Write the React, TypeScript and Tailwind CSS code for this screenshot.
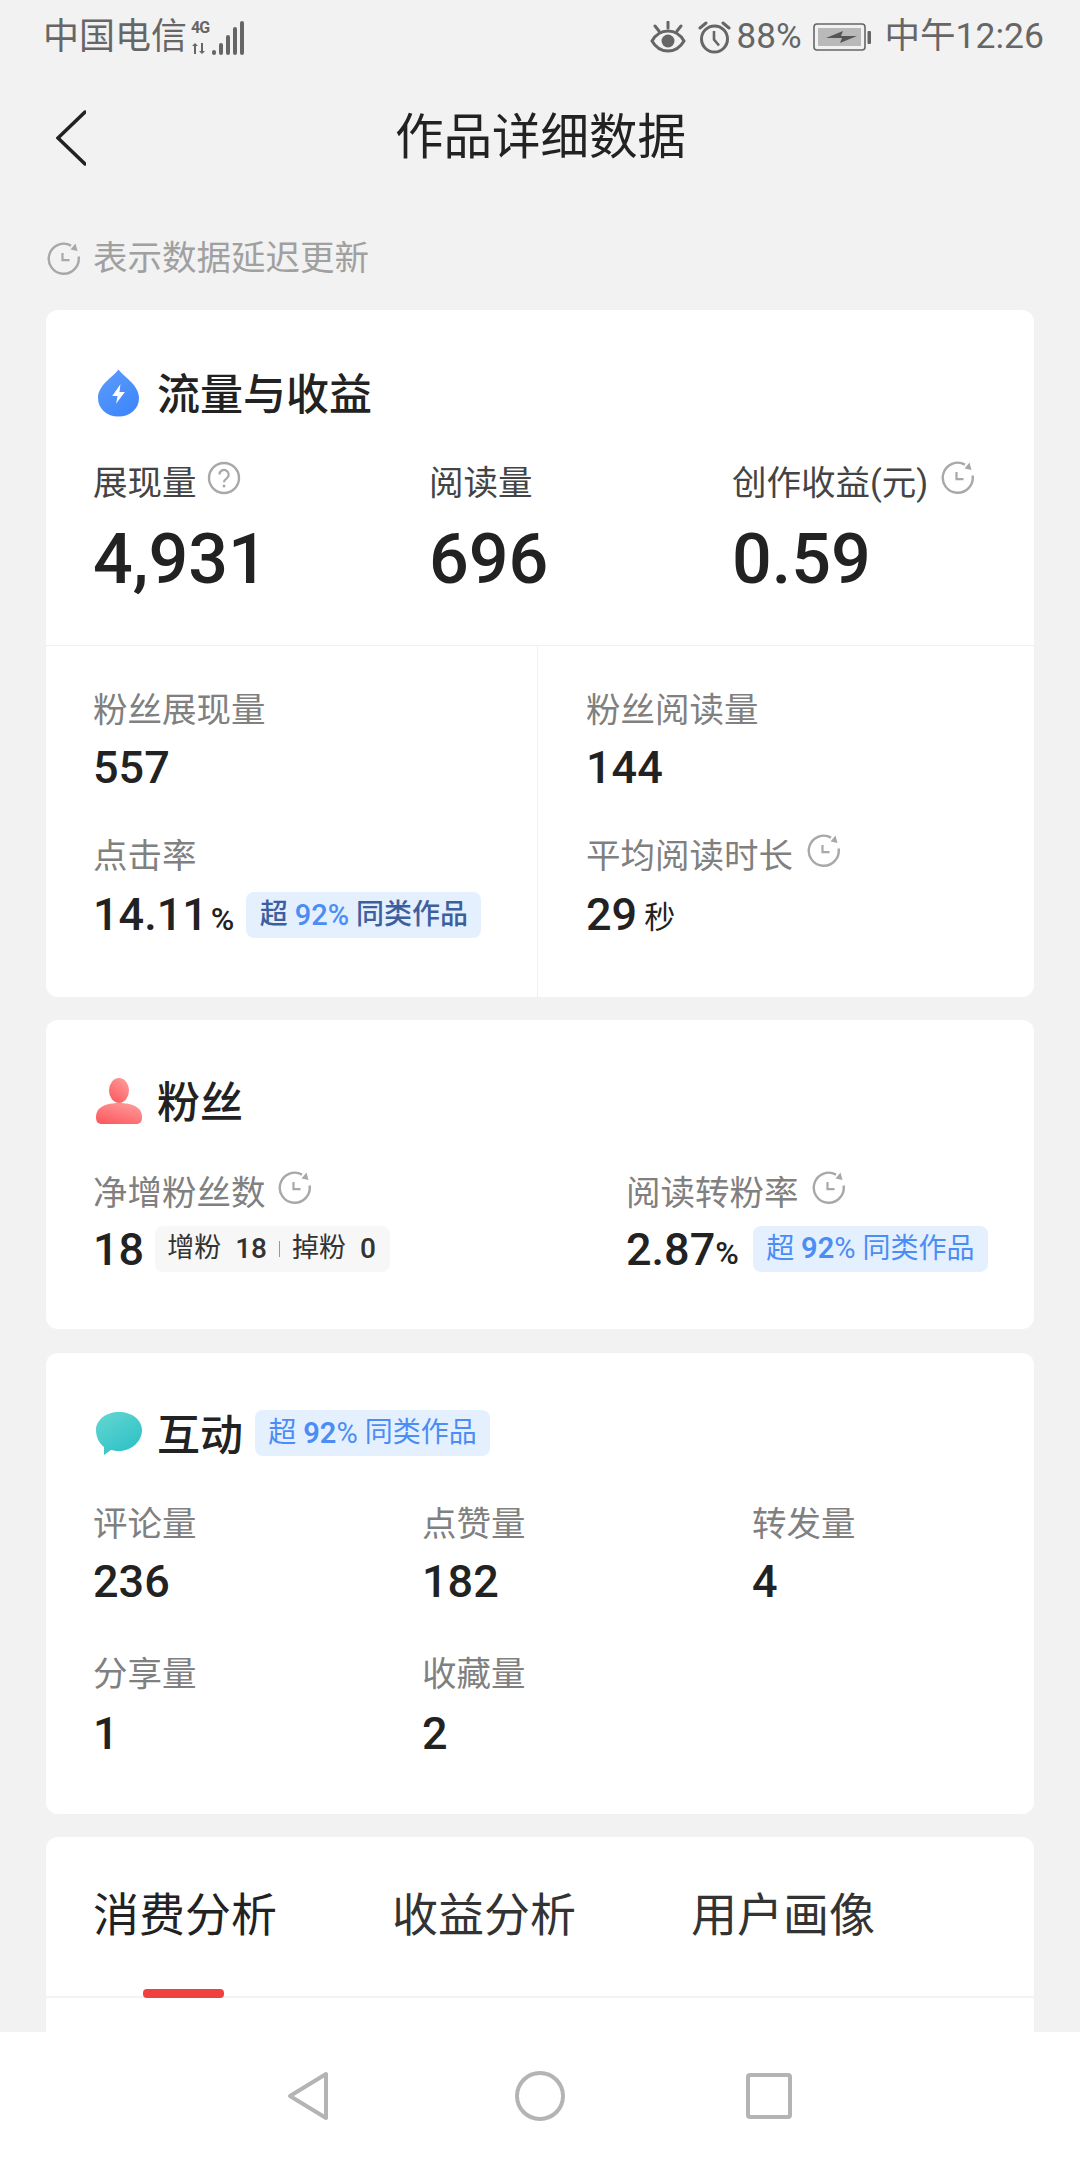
const Clock = ({ className = "" }: { className?: string }) => (
  <svg viewBox="0 0 34 34" className={`w-[34px] h-[34px] shrink-0 ${className}`} fill="none" stroke="#a8a8a8" strokeWidth="2.4">
    <path d="M31.6 14.5A15 15 0 1 1 24 3.6" />
    <path d="M28.5 1.5 L30.5 9 L23.5 7.5" fill="#a8a8a8" stroke="none" />
    <path d="M15.5 11v7.2h7" strokeWidth="2.2" />
  </svg>
);

const Help = () => (
  <svg viewBox="0 0 34 34" className="w-[34px] h-[34px] shrink-0" fill="none" stroke="#a8a8a8" strokeWidth="2.4">
    <circle cx="17" cy="17" r="15" />
    <path d="M12.5 13.5a4.6 4.6 0 1 1 7.2 3.8c-1.7 1.2-2.7 2-2.7 4" strokeWidth="2.2" />
    <circle cx="17" cy="25" r="1.5" fill="#a8a8a8" stroke="none" />
  </svg>
);

const Drop = () => (
  <svg viewBox="0 0 42 48" className="w-[41px] h-[48px] shrink-0">
    <defs>
      <linearGradient id="dropFill" x1="0" y1="0" x2="0.6" y2="1">
        <stop offset="0" stopColor="#5e9dfa" />
        <stop offset="1" stopColor="#3f87fb" />
      </linearGradient>
    </defs>
    <path d="M21 0C27 8 42 16 42 29C42 40 33 48 21 48C9 48 0 40 0 29C0 16 15 8 21 0Z" fill="url(#dropFill)" />
    <path d="M23 15L14.5 27H20L18.5 35L27.5 23H22Z" fill="#fff" />
  </svg>
);

const Person = () => (
  <svg viewBox="0 0 46 46" className="w-[46px] h-[46px] shrink-0">
    <defs>
      <linearGradient id="personFill" x1="0.8" y1="0" x2="0.2" y2="1">
        <stop offset="0" stopColor="#ff9a9a" />
        <stop offset="1" stopColor="#fc5a5f" />
      </linearGradient>
    </defs>
    <ellipse cx="23" cy="12.5" rx="10" ry="12.5" fill="url(#personFill)" />
    <path d="M23 25C36 25 46 29 46 39C46 44 44 46 40 46H6C2 46 0 44 0 39C0 29 10 25 23 25Z" fill="url(#personFill)" />
  </svg>
);

const Bubble = () => (
  <svg viewBox="0 0 46 43" className="w-[46px] h-[43px] shrink-0 -mt-[6px]">
    <defs>
      <linearGradient id="bubbleFill" x1="0.1" y1="0" x2="0.8" y2="1">
        <stop offset="0" stopColor="#63d6d2" />
        <stop offset="1" stopColor="#2cc0c5" />
      </linearGradient>
    </defs>
    <path d="M23 0C36 0 46 8 46 18C46 29 36 39 23 39C20 39 17 38.500 15 38L8 43L8 35C3 31 0 25 0 18C0 8 10 0 23 0Z" fill="url(#bubbleFill)" />
  </svg>
);

const Signal = () => (
  <div className="flex items-end gap-[3px] ml-[4px] h-[36px]">
    <div className="flex flex-col justify-between h-[34px] w-[18px] mb-[1px]">
      <span className="text-[16px] leading-[16px] font-bold text-[#666] tracking-[-1px]">4G</span>
      <svg viewBox="0 0 18 11" className="w-[18px] h-[11px]" fill="#666">
        <path d="M3 11V3H1L4 0L7 3H5V11Z" />
        <path d="M10 0H12V8H14L11 11L8 8H10Z" />
      </svg>
    </div>
    <div className="w-[4px] h-[5px] bg-[#666] rounded-full" />
    <div className="w-[4px] h-[12px] bg-[#666] rounded-full" />
    <div className="w-[4px] h-[20px] bg-[#666] rounded-full" />
    <div className="w-[4px] h-[28px] bg-[#666] rounded-full" />
    <div className="w-[4px] h-[34px] bg-[#666] rounded-full" />
  </div>
);

const Eye = () => (
  <svg viewBox="0 0 36 32" className="w-[36px] h-[32px]" fill="none" stroke="#666" strokeWidth="3">
    <path d="M2 20C6 13 12 10 18 10C24 10 30 13 34 20C30 27 24 30 18 30C12 30 6 27 2 20Z" />
    <circle cx="18" cy="20" r="6.500" fill="#666" stroke="none" />
    <path d="M18 1v6M5 5l4 5M31 5l-4 5" strokeLinecap="round" />
  </svg>
);

const Alarm = () => (
  <svg viewBox="0 0 33 33" className="w-[33px] h-[33px]" fill="none" stroke="#666" strokeWidth="3">
    <circle cx="16.500" cy="18" r="13" />
    <path d="M16 10v8.500l5 6" strokeWidth="2.600" />
    <path d="M2 7l6-5M31 7l-6-5" strokeLinecap="round" />
  </svg>
);

const Battery = () => (
  <svg viewBox="0 0 58 30" className="w-[58px] h-[30px]" fill="none">
    <rect x="1" y="2" width="51" height="26" rx="3" stroke="#666" strokeWidth="1.600" />
    <rect x="5" y="6" width="43" height="18" fill="#b9b9b9" />
    <path d="M13 16L30 9L28 14L44 14L27 21L29 16Z" fill="#555" />
    <rect x="54.500" y="9" width="3.500" height="13" rx="1" fill="#666" />
  </svg>
);

const Pct = ({ dark = false }: { dark?: boolean }) => (
  <span className={`inline-flex items-center h-[46px] w-[235px] justify-center rounded-[8px] bg-[#e5f0ff] text-[28px] leading-none whitespace-pre ${dark ? "text-[#3d5f9e] font-medium" : "text-[#4b8df5]"}`}>
    超 <span className={`text-[29px] text-[#4b8df5] ${dark ? "font-medium" : "font-semibold"}`}>92</span><span className="text-[29px] text-[#4b8df5]">%</span> 同类作品
  </span>
);

const Label = ({ children, dark = false }: { children: string; dark?: boolean }) => (
  <div className={`text-[34.5px] leading-[44px] whitespace-nowrap ${dark ? "text-[#444]" : "text-[#808080]"}`}>{children}</div>
);

const Value = ({ children }: { children: string }) => (
  <span className="text-[45px] leading-[56px] font-medium text-[#222]">{children}</span>
);

const Heading = ({ children }: { children: string }) => (
  <div className="text-[43px] leading-[60px] font-medium text-[#222] whitespace-nowrap">{children}</div>
);

const Metric = ({ label, value, rowGap = "mt-[8px]" }: { label: string; value: string; rowGap?: string }) => (
  <div>
    <Label>{label}</Label>
    <div className={rowGap}><Value>{value}</Value></div>
  </div>
);

export default function App() {
  return (
    <div className="w-[1080px] h-[2160px] flex flex-col overflow-hidden bg-[#f2f2f2] font-['Roboto','Noto_Sans_CJK_SC',sans-serif]">
      <div className="flex-1 min-h-0 overflow-hidden">
        {/* status bar */}
        <div className="h-[74px] pl-[43px] pr-[36px] flex items-center justify-between text-[#666] text-[35.5px]">
          <div className="flex items-center">
            <span className="text-[36px]">中国电信</span>
            <Signal />
          </div>
          <div className="flex items-center">
            <Eye />
            <span className="ml-[12px]"><Alarm /></span>
            <span className="ml-[6px] text-[35px]">88%</span>
            <span className="ml-[11px]"><Battery /></span>
            <span className="ml-[14px]">中午12:26</span>
          </div>
        </div>

        {/* title bar */}
        <div className="h-[128px] pl-[56px] flex items-center">
          <svg viewBox="0 0 30 56" className="w-[30px] h-[56px] shrink-0" fill="none" stroke="#222" strokeWidth="3.500" strokeLinecap="round">
            <path d="M29 2L2 28L29 54" />
          </svg>
          <div className="ml-[309px] text-[48.5px] leading-none text-[#222]">作品详细数据</div>
        </div>

        <div className="h-[108px] pt-[6px] pl-[47px] flex items-center text-[34.5px] text-[#a0a0a0]">
          <Clock />
          <span className="ml-[12px]">表示数据延迟更新</span>
        </div>

        <div className="px-[46px]">
          {/* traffic and revenue */}
          <div className="bg-white rounded-[12px]">
            <div className="pt-[53px] pb-[44px] px-[47px] border-b border-[#f0f0f0]">
              <div className="h-[60px] flex items-center gap-[18px] ml-[5px]">
                <Drop />
                <div className="mt-[4px]"><Heading>流量与收益</Heading></div>
              </div>
              <div className="mt-[38px] grid grid-cols-[336px_303px_1fr]">
                <div>
                  <div className="flex items-start gap-[10px]">
                    <Label dark>展现量</Label>
                    <Help />
                  </div>
                  <div className="mt-[12px] text-[70px] leading-[84px] font-medium text-[#222]">4,931</div>
                </div>
                <div>
                  <Label dark>阅读量</Label>
                  <div className="mt-[12px] text-[70px] leading-[84px] font-medium text-[#222]">696</div>
                </div>
                <div>
                  <div className="flex items-start gap-[13px]">
                    <Label dark>创作收益(元)</Label>
                    <Clock />
                  </div>
                  <div className="mt-[12px] text-[70px] leading-[84px] font-medium text-[#222]">0.59</div>
                </div>
              </div>
            </div>
            <div className="grid grid-cols-[492px_1fr] h-[351px]">
              <div className="pl-[47px] pt-[42px] border-r border-[#f0f0f0]">
                <Metric label="粉丝展现量" value="557" />
                <div className="mt-[38px]">
                  <Label>点击率</Label>
                  <div className="mt-[9px] flex items-center h-[56px]">
                    <Value>14.11</Value>
                    <span className="text-[32px] font-medium text-[#222] ml-[3px] mt-[8px]">%</span>
                    <span className="ml-[12px]"><Pct dark /></span>
                  </div>
                </div>
              </div>
              <div className="pl-[48px] pt-[42px]">
                <Metric label="粉丝阅读量" value="144" />
                <div className="mt-[38px]">
                  <div className="flex items-start gap-[14px] h-[44px]">
                    <Label>平均阅读时长</Label>
                    <Clock />
                  </div>
                  <div className="mt-[9px] flex items-center h-[56px]">
                    <Value>29</Value>
                    <span className="ml-[7px] mt-[6px] text-[31px] text-[#222]">秒</span>
                  </div>
                </div>
              </div>
            </div>
          </div>

          {/* followers */}
          <div className="mt-[23px] bg-white rounded-[12px] pt-[53px] pb-[51px] pl-[47px]">
            <div className="flex items-center ml-[3px]">
              <div className="-mt-[5px]"><Person /></div>
              <div className="ml-[15px]"><Heading>粉丝</Heading></div>
            </div>
            <div className="mt-[38px] grid grid-cols-[533px_1fr]">
              <div>
                <div className="flex items-start gap-[12px]">
                  <Label>净增粉丝数</Label>
                  <Clock />
                </div>
                <div className="mt-[7px] flex items-center h-[56px]">
                  <Value>18</Value>
                  <div className="ml-[11px] -mt-[3px] h-[46px] w-[235px] rounded-[8px] bg-[#f7f7f7] flex items-center pl-[12px] text-[27px] text-[#333] whitespace-nowrap">
                    <span>增粉</span>
                    <span className="ml-[14px] text-[28px] font-medium">18</span>
                    <span className="mx-[12px] w-[1px] h-[16px] bg-[#999]" />
                    <span>掉粉</span>
                    <span className="ml-[14px] text-[28px] font-medium">0</span>
                  </div>
                </div>
              </div>
              <div>
                <div className="flex items-start gap-[13px]">
                  <Label>阅读转粉率</Label>
                  <Clock />
                </div>
                <div className="mt-[7px] flex items-center h-[56px]">
                  <Value>2.87</Value>
                  <span className="text-[32px] font-medium text-[#222] mt-[6px]">%</span>
                  <span className="ml-[14px] -mt-[3px]"><Pct /></span>
                </div>
              </div>
            </div>
          </div>

          {/* interactions */}
          <div className="mt-[24px] bg-white rounded-[12px] pt-[53px] pb-[52px] pl-[47px]">
            <div className="flex items-center ml-[3px]">
              <Bubble />
              <span className="ml-[15px]"><Heading>互动</Heading></span>
              <span className="ml-[12px] -mt-[6px]"><Pct /></span>
            </div>
            <div className="mt-[36px] grid grid-cols-[329px_330px_1fr] gap-y-[42px]">
              <Metric label="评论量" value="236" />
              <Metric label="点赞量" value="182" />
              <Metric label="转发量" value="4" />
              <Metric label="分享量" value="1" rowGap="mt-[10px]" />
              <Metric label="收藏量" value="2" rowGap="mt-[10px]" />
            </div>
          </div>

          {/* analysis tabs */}
          <div className="mt-[23px] bg-white rounded-t-[12px] h-[300px]">
            <div className="pt-[48px] pl-[47px] flex gap-[115px] border-b-2 border-[#f3f3f3] text-[46px] leading-[60px] text-[#333]">
              <div className="flex flex-col items-center">
                <span className="text-[#222]">消费分析</span>
                <div className="mt-[44px] -mb-[2px] mr-[3px] w-[81px] h-[9px] rounded-[4px] bg-[#f04142]" />
              </div>
              <span>收益分析</span>
              <span>用户画像</span>
            </div>
          </div>
        </div>
      </div>

      {/* navigation bar */}
      <div className="h-[128px] shrink-0 bg-white flex items-center pl-[287px]">
        <svg viewBox="0 0 42 50" className="w-[42px] h-[50px]" fill="none" stroke="#b4b4b4" strokeWidth="4" strokeLinejoin="round">
          <path d="M39 3V47L3 25Z" />
        </svg>
        <svg viewBox="0 0 50 50" className="ml-[186px] w-[50px] h-[50px]" fill="none" stroke="#b4b4b4" strokeWidth="4">
          <circle cx="25" cy="25" r="23" />
        </svg>
        <svg viewBox="0 0 46 46" className="ml-[181px] w-[46px] h-[46px]" fill="none" stroke="#b4b4b4" strokeWidth="4" strokeLinejoin="round">
          <rect x="2" y="2" width="42" height="42" rx="2" />
        </svg>
      </div>
    </div>
  );
}
